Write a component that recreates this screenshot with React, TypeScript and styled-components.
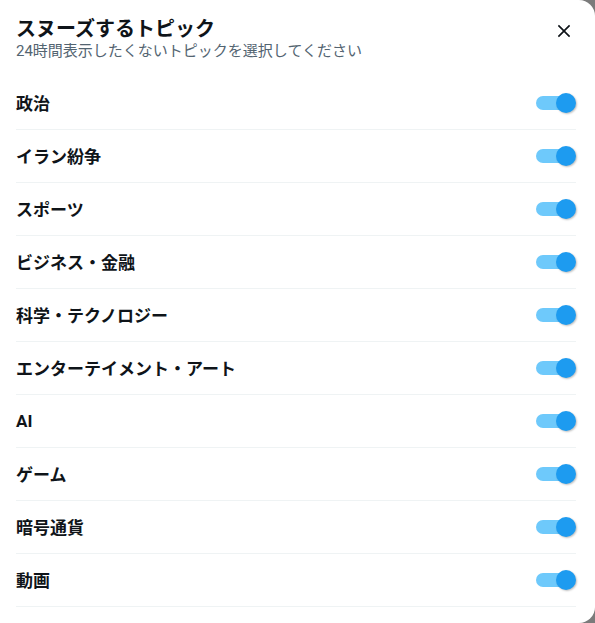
import { useState } from 'react'
import styled, { createGlobalStyle } from 'styled-components'

const GlobalStyle = createGlobalStyle`
    html, body {
        margin: 0;
        padding: 0;
        background: #7b7b7b;
    }
    * {
        box-sizing: border-box;
    }
`

const Dialog = styled.div`
    width: 595px;
    height: 623px;
    background: #fff;
    border-radius: 0 16px 16px 0;
    overflow: hidden;
    font-family: Roboto, "Noto Sans CJK JP", sans-serif;
    color: #0f1419;
`

const Header = styled.div`
    display: flex;
    justify-content: space-between;
    align-items: flex-start;
    padding: 16px 19px 0 16px;
`

const Titles = styled.div`
    display: flex;
    flex-direction: column;
`

const Title = styled.h2`
    margin: 0;
    font-size: 20px;
    line-height: 26px;
    font-weight: 700;
`

const Subtitle = styled.p`
    margin: 0;
    font-size: 15px;
    line-height: 18px;
    color: #536471;
`

const CloseButton = styled.button`
    width: 24px;
    height: 24px;
    margin-top: 3px;
    padding: 0;
    border: none;
    background: none;
    display: flex;
    align-items: center;
    justify-content: center;
    color: #0f1419;
    cursor: pointer;
`

const List = styled.ul`
    list-style: none;
    margin: 17px 19px 0 16px;
    padding: 0;
`

const Row = styled.li`
    height: 53px;
    display: flex;
    align-items: center;
    justify-content: space-between;
    border-bottom: 1px solid #eff3f4;
`

const Label = styled.span`
    font-size: 17px;
    font-weight: 700;
    padding-bottom: 1px;
`

const Track = styled.button<{ $on: boolean }>`
    position: relative;
    width: 40px;
    height: 20px;
    padding: 0;
    border: none;
    background: none;
    cursor: pointer;
    margin-bottom: 1px;

    &::before {
        content: '';
        position: absolute;
        left: 0;
        top: 3px;
        width: 36px;
        height: 14px;
        border-radius: 7px;
        background: ${p => (p.$on ? '#6ec9fb' : '#cfd9de')};
    }
`

const Knob = styled.span<{ $on: boolean }>`
    position: absolute;
    top: 0;
    left: ${p => (p.$on ? '20px' : '0')};
    width: 20px;
    height: 20px;
    border-radius: 50%;
    background: ${p => (p.$on ? '#1d9bf0' : '#fff')};
    box-shadow: 1px 1px 2px rgba(0, 0, 0, 0.25);
`

const topics = [
    '政治',
    'イラン紛争',
    'スポーツ',
    'ビジネス・金融',
    '科学・テクノロジー',
    'エンターテイメント・アート',
    'AI',
    'ゲーム',
    '暗号通貨',
    '動画',
]

export default function App() {
    const [enabled, setEnabled] = useState<boolean[]>(topics.map(() => true))

    const toggle = (i: number) => {
        setEnabled(prev => prev.map((v, j) => (j === i ? !v : v)))
    }

    return (
        <>
            <GlobalStyle />
            <Dialog>
                <Header>
                    <Titles>
                        <Title>スヌーズするトピック</Title>
                        <Subtitle>24時間表示したくないトピックを選択してください</Subtitle>
                    </Titles>
                    <CloseButton aria-label="閉じる">
                        <svg width="20" height="20" viewBox="0 0 24 24" fill="currentColor">
                            <path d="M10.59 12L4.54 5.96l1.42-1.42L12 10.59l6.04-6.05 1.42 1.42L13.41 12l6.05 6.04-1.42 1.42L12 13.41l-6.04 6.05-1.42-1.42L10.59 12z" />
                        </svg>
                    </CloseButton>
                </Header>
                <List>
                    {topics.map((t, i) => (
                        <Row key={t}>
                            <Label>{t}</Label>
                            <Track $on={enabled[i]} onClick={() => toggle(i)}>
                                <Knob $on={enabled[i]} />
                            </Track>
                        </Row>
                    ))}
                </List>
            </Dialog>
        </>
    )
}
